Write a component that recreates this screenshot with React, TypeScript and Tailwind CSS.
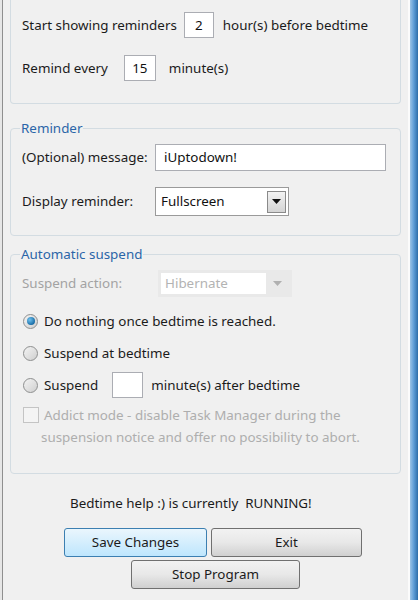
import { ReactNode } from 'react'

const font = { fontFamily: '"Noto Sans", "Open Sans", sans-serif' }

function NumBox({ value, className = '' }: { value: string; className?: string }) {
    return (
        <div
            className={`h-[26px] bg-white border border-[#abadb3] flex items-center justify-center text-[#111] ${className}`}
        >
            {value}
        </div>
    )
}

function Radio({ checked, children }: { checked?: boolean; children: ReactNode }) {
    return (
        <div className="flex items-center h-[26px]">
            <span className="w-[15px] h-[15px] rounded-full border border-[#8e8f8f] bg-gradient-to-br from-[#f4f4f4] to-[#cfcfcf] flex items-center justify-center mr-[6px] ml-[1px]">
                {checked && (
                    <span className="w-[8px] h-[8px] rounded-full bg-[radial-gradient(circle_at_35%_35%,#6fc1ee,#1b6fa8_70%,#0d4a78)]" />
                )}
            </span>
            {children}
        </div>
    )
}

function Group({ title, className = '', children }: { title: string; className?: string; children: ReactNode }) {
    return (
        <fieldset className={`mx-[7px] border border-[#d3dce2] rounded-[4px] px-[11px] ${className}`}>
            <legend className="-ml-[2px] px-[1px] text-[#2b65a8] leading-[18px]">{title}</legend>
            {children}
        </fieldset>
    )
}

export default function App() {
    return (
        <div style={font} className="w-[418px] h-[600px] bg-[#f0f0f0] flex overflow-hidden text-[13.4px] text-[#1b1b1b]">
            {/* left frame edge */}
            <div className="w-[3px] flex">
                <div className="w-[2px] bg-[#e6e6e6]" />
                <div className="w-[1px] bg-[#8f8f8f]" />
            </div>

            <div className="flex-1 flex flex-col">
                {/* top group (cut off) */}
                <div className="mx-[7px] h-[104px] border border-t-0 border-[#d3dce2] rounded-b-[4px] px-[11px] pt-[12px]">
                    <div className="flex items-center h-[26px]">
                        <span>Start showing reminders</span>
                        <NumBox value="2" className="w-[30px] ml-[7px] mr-[9px]" />
                        <span>hour(s) before bedtime</span>
                    </div>
                    <div className="flex items-center h-[26px] mt-[17px]">
                        <span>Remind every</span>
                        <NumBox value="15" className="w-[32px] ml-[16px] mr-[13px]" />
                        <span>minute(s)</span>
                    </div>
                </div>

                {/* reminder */}
                <Group title="Reminder" className="mt-[15px] h-[117px] pt-[7px]">
                    <div className="flex items-center h-[27px]">
                        <span className="w-[133px]">(Optional) message:</span>
                        <div className="w-[231px] h-[27px] bg-white border border-[#abadb3] flex items-center pl-[8px] text-[#111]">
                            iUptodown!
                        </div>
                    </div>
                    <div className="flex items-center h-[29px] mt-[16px]">
                        <span className="w-[133px]">Display reminder:</span>
                        <div className="w-[134px] h-[29px] bg-white border border-[#9a9a9a] flex items-center pl-[5px] pr-[2px] text-[#111]">
                            <span className="flex-1">Fullscreen</span>
                            <span className="w-[19px] h-[22px] border border-[#8a8a8a] bg-gradient-to-b from-[#f2f2f2] to-[#d4d4d4] flex items-center justify-center">
                                <svg width="9" height="5" viewBox="0 0 9 5">
                                    <path d="M0 0h9L4.5 5z" fill="#111" />
                                </svg>
                            </span>
                        </div>
                    </div>
                </Group>

                {/* automatic suspend */}
                <Group title="Automatic suspend" className="mt-[9px] h-[229px] pt-[7px]">
                    <div className="flex items-center h-[27px]">
                        <span className="w-[136px] text-[#a3a3a3]">Suspend action:</span>
                        <div className="w-[134px] h-[27px] bg-[#e9e9e9] flex items-center p-[3px]">
                            <span className="w-[105px] h-full bg-white text-[#b3b3b3] flex items-center pl-[4px]">Hibernate</span>
                            <span className="flex-1 flex justify-center">
                                <svg width="9" height="5" viewBox="0 0 9 5">
                                    <path d="M0 0h9L4.5 5z" fill="#b0b0b0" />
                                </svg>
                            </span>
                        </div>
                    </div>
                    <div className="mt-[11px]">
                        <Radio checked>Do nothing once bedtime is reached.</Radio>
                    </div>
                    <div className="mt-[6px]">
                        <Radio>Suspend at bedtime</Radio>
                    </div>
                    <div className="mt-[6px]">
                        <Radio>
                            <span>Suspend</span>
                            <NumBox value="" className="w-[31px] ml-[14px] mr-[8px]" />
                            <span>minute(s) after bedtime</span>
                        </Radio>
                    </div>
                    <div className="flex mt-[6px] text-[#aeaeae] leading-[22px]">
                        <span className="w-[16px] h-[16px] border border-[#c4c4c4] bg-[#f4f4f4] mt-[3px] mr-[2px] ml-[1px] shrink-0" />
                        <span className="indent-[3px]">
                            Addict mode - disable Task Manager during the
                            <br />
                            suspension notice and offer no possibility to abort.
                        </span>
                    </div>
                </Group>

                {/* status */}
                <div className="pl-[67px] mt-[19px] h-[20px] leading-[20px]">
                    Bedtime help :) is currently&nbsp; RUNNING!
                </div>

                <div className="flex mt-[15px] pl-[61px] gap-[4px]">
                    <button className="w-[143px] h-[29px] rounded-[3px] border border-[#3c7fb1] bg-gradient-to-b from-[#eaf6fd] to-[#bee6fd]">
                        Save Changes
                    </button>
                    <button className="w-[151px] h-[29px] rounded-[3px] border border-[#707070] bg-gradient-to-b from-[#f2f2f2] via-[#e8e8e8] to-[#d0d0d0]">
                        Exit
                    </button>
                </div>
                <div className="flex mt-[3px] pl-[128px]">
                    <button className="w-[169px] h-[29px] rounded-[3px] border border-[#707070] bg-gradient-to-b from-[#f2f2f2] via-[#e8e8e8] to-[#d0d0d0]">
                        Stop Program
                    </button>
                </div>
            </div>

            {/* right frame edge */}
            <div className="w-[10px] flex">
                <div className="w-[2px] bg-[#fbfbfb]" />
                <div className="w-[8px] bg-gradient-to-r from-[#9cc4e6] via-[#5b9bd5] to-[#2e6ea8]" />
            </div>
        </div>
    )
}
